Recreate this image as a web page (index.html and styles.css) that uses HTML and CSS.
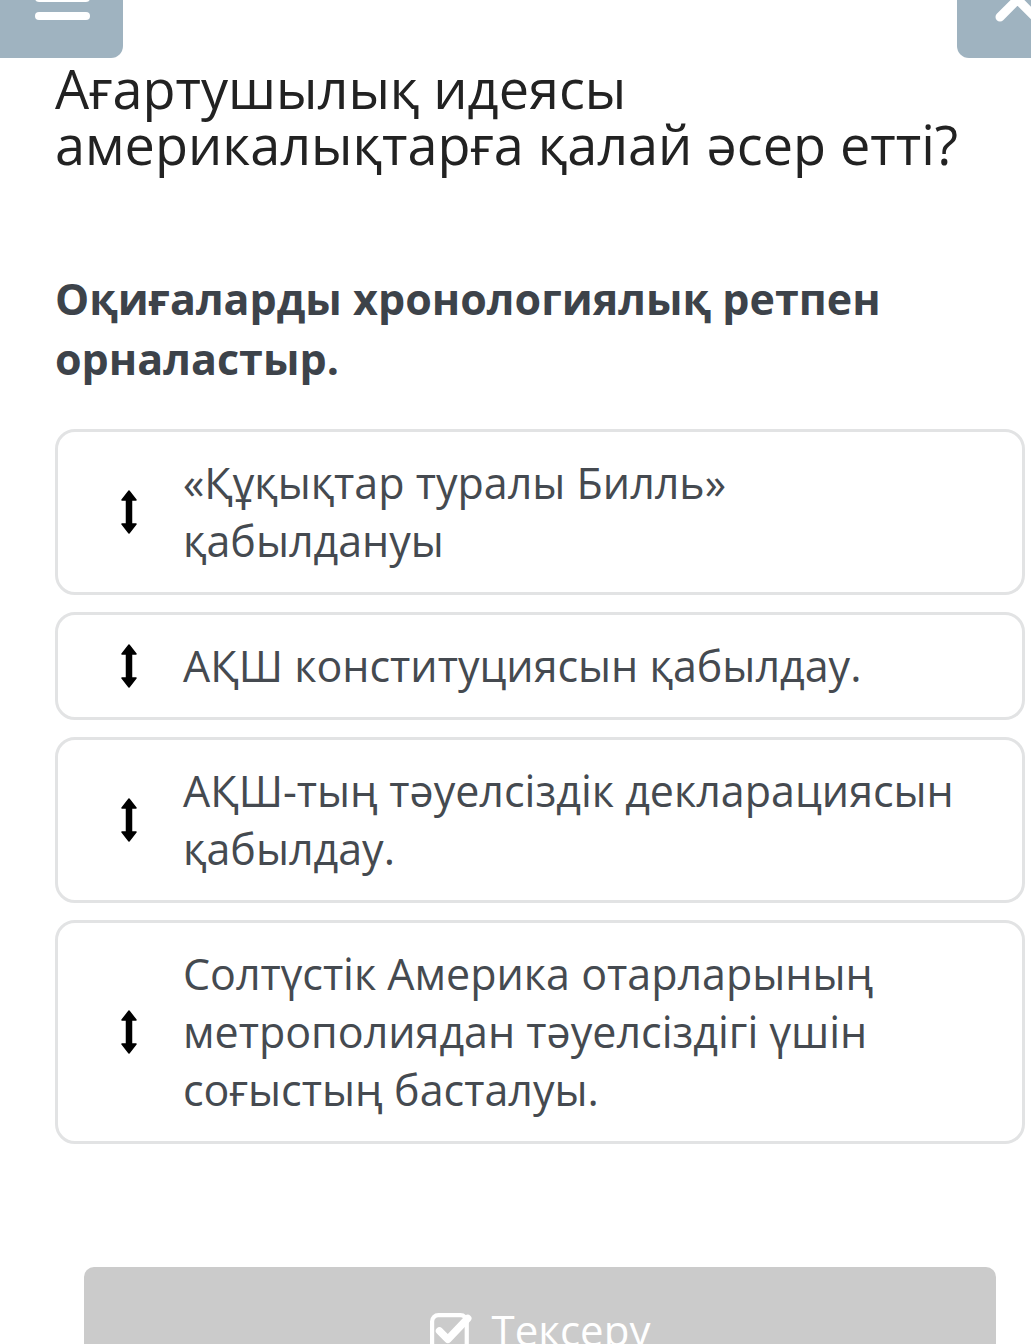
FILE: index.html
```html
<!DOCTYPE html>
<html lang="kk">
<head>
  <meta charset="UTF-8">
  <title>Тапсырма</title>
  <link rel="stylesheet" href="styles.css">
</head>
<body>

  <div class="topbar">
    <button class="menuBtn" aria-label="Мәзір">
      <svg width="123" height="58" viewBox="0 0 123 58">
        <rect x="35" y="-6" width="55" height="8" rx="4" fill="#fff"/>
        <rect x="35" y="12" width="55" height="8" rx="4" fill="#fff"/>
      </svg>
    </button>
    <button class="closeBtn" aria-label="Жабу">
      <svg width="74" height="58" viewBox="0 0 74 58">
        <path d="M43 17 L78 -18 M43 -18 L78 17" stroke="#fff" stroke-width="9" stroke-linecap="round"/>
      </svg>
    </button>
  </div>

  <div class="page">
    <h1 class="question">Ағартушылық идеясы америкалықтарға қалай әсер етті?</h1>

    <h2 class="task">Оқиғаларды хронологиялық ретпен орналастыр.</h2>

    <div class="list">
      <div class="item">
        <span class="handle"><svg width="16" height="44" viewBox="0 0 16 44"><path d="M8 1 L15 10 L10.5 10 L10.5 34 L15 34 L8 43 L1 34 L5.5 34 L5.5 10 L1 10 Z" fill="#000" stroke="#000" stroke-width="1.5" stroke-linejoin="round"/></svg></span>
        <span class="label">«Құқықтар туралы Билль» қабылдануы</span>
      </div>
      <div class="item">
        <span class="handle"><svg width="16" height="44" viewBox="0 0 16 44"><path d="M8 1 L15 10 L10.5 10 L10.5 34 L15 34 L8 43 L1 34 L5.5 34 L5.5 10 L1 10 Z" fill="#000" stroke="#000" stroke-width="1.5" stroke-linejoin="round"/></svg></span>
        <span class="label">АҚШ конституциясын қабылдау.</span>
      </div>
      <div class="item">
        <span class="handle"><svg width="16" height="44" viewBox="0 0 16 44"><path d="M8 1 L15 10 L10.5 10 L10.5 34 L15 34 L8 43 L1 34 L5.5 34 L5.5 10 L1 10 Z" fill="#000" stroke="#000" stroke-width="1.5" stroke-linejoin="round"/></svg></span>
        <span class="label">АҚШ-тың тәуелсіздік декларациясын қабылдау.</span>
      </div>
      <div class="item">
        <span class="handle"><svg width="16" height="44" viewBox="0 0 16 44"><path d="M8 1 L15 10 L10.5 10 L10.5 34 L15 34 L8 43 L1 34 L5.5 34 L5.5 10 L1 10 Z" fill="#000" stroke="#000" stroke-width="1.5" stroke-linejoin="round"/></svg></span>
        <span class="label">Солтүстік Америка отарларының метрополиядан тәуелсіздігі үшін соғыстың басталуы.</span>
      </div>
    </div>

    <button class="checkBtn">
      <svg width="42" height="42" viewBox="0 0 40 40">
        <rect x="2" y="4" width="33" height="33" rx="6" fill="none" stroke="#fff" stroke-width="4"/>
        <path d="M9 19 L17 27 L36 7" fill="none" stroke="#fff" stroke-width="7" stroke-linecap="round" stroke-linejoin="round"/>
      </svg>
      <span>Тексеру</span>
    </button>
  </div>

</body>
</html>
```

FILE: styles.css
```css
body {
  margin: 0;
  font-family: "Open Sans", "Noto Sans", sans-serif;
  background-color: #ffffff;
  overflow: hidden;
}
button {
  border: none;
  padding: 0;
  font-family: inherit;
  cursor: pointer;
}
.topbar {
  display: flex;
  justify-content: space-between;
  height: 58px;
}
.menuBtn, .closeBtn {
  display: block;
  height: 58px;
  background-color: #9fb3c0;
}
.menuBtn svg, .closeBtn svg {
  display: block;
}
.menuBtn {
  width: 123px;
  border-radius: 0 0 12px 0;
}
.closeBtn {
  width: 74px;
  border-radius: 0 0 0 12px;
}
.page {
  padding: 0 6px 0 55px;
}
.question {
  margin: 2px 0 0;
  font-size: 54px;
  line-height: 56px;
  font-weight: 400;
  color: #222222;
}
.task {
  margin: 97px 0 0;
  font-size: 43px;
  line-height: 60px;
  font-weight: 700;
  color: #3d434a;
}
.list {
  display: flex;
  flex-direction: column;
  gap: 17px;
  margin-top: 40px;
}
.item {
  display: flex;
  align-items: center;
  gap: 46px;
  padding: 22px 50px 22px 63px;
  border: 3px solid #e2e3e4;
  border-radius: 20px;
  background: #ffffff;
}
.handle {
  flex: none;
  display: flex;
}
.label {
  font-size: 43px;
  line-height: 58px;
  color: #454a50;
}
.checkBtn {
  display: flex;
  justify-content: center;
  align-items: flex-start;
  gap: 20px;
  width: 912px;
  height: 120px;
  margin: 123px 0 0 29px;
  padding-top: 38px;
  background-color: #cbcbcb;
  border-radius: 10px;
  color: #ffffff;
  font-size: 42px;
  line-height: 50px;
}
.checkBtn svg {
  margin-top: 6px;
}
```
